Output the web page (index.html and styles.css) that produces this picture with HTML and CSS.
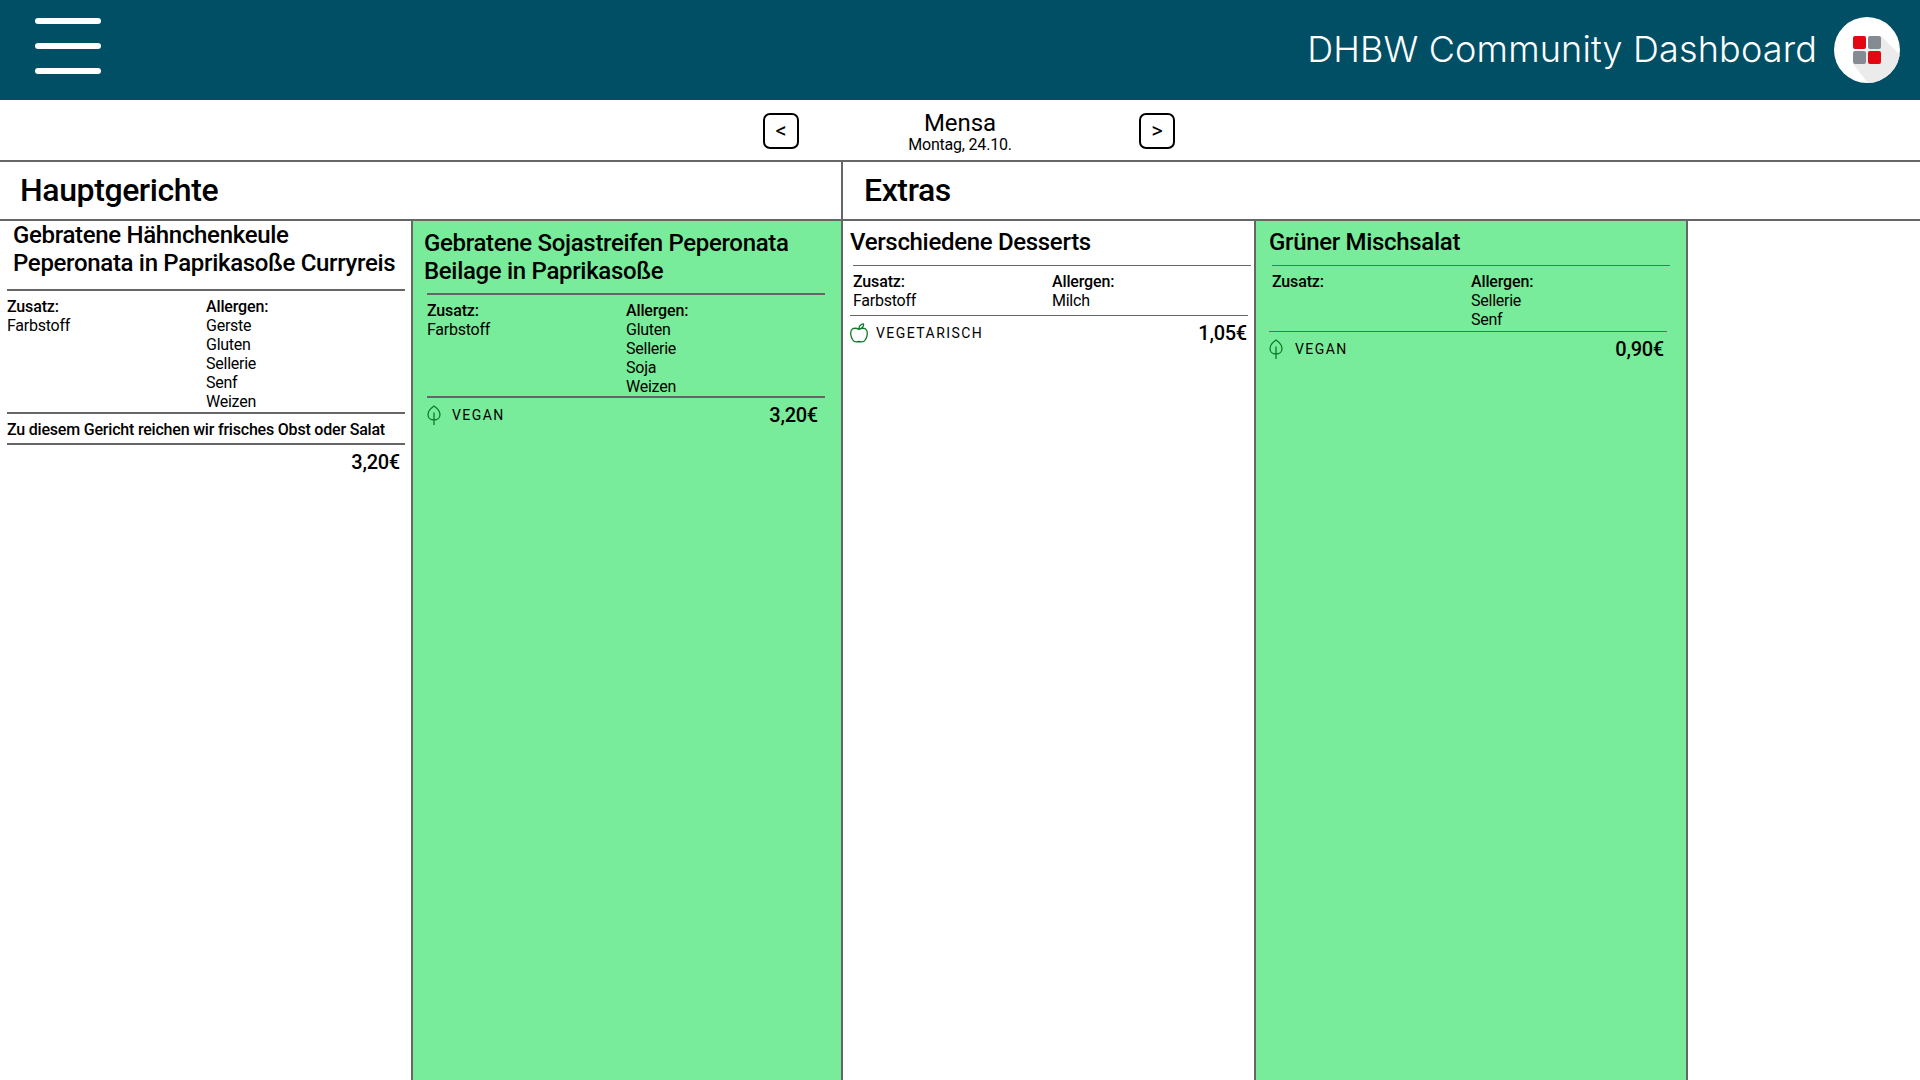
FILE: index.html
```html
<!DOCTYPE html>
<html lang="de">
<head>
<meta charset="utf-8">
<title>DHBW Community Dashboard</title>
<link rel="stylesheet" href="styles.css">
</head>
<body>
<header class="topbar">
  <button class="burger" aria-label="Menü"><span></span><span></span><span></span></button>
  <div class="brand">
    <h1 class="brand-title">DHBW Community Dashboard</h1>
    <svg class="logo" viewBox="0 0 66 66" width="66" height="66" aria-hidden="true">
      <defs><clipPath id="logo-clip"><circle cx="33" cy="33" r="33"/></clipPath></defs>
      <circle cx="33" cy="33" r="33" fill="#fff"/>
      <polygon clip-path="url(#logo-clip)" points="47,19 80,52 80,80 45,80 19,47" fill="#ebebeb"/>
      <rect x="19" y="19" width="13" height="13" rx="2" fill="#e30613"/>
      <rect x="34" y="19" width="13" height="13" rx="2" fill="#868b93"/>
      <rect x="19" y="34" width="13" height="13" rx="2" fill="#868b93"/>
      <rect x="34" y="34" width="13" height="13" rx="2" fill="#e30613"/>
    </svg>
  </div>
</header>

<nav class="daynav">
  <button class="navbtn">&lt;</button>
  <div class="daylabel">
    <div class="dayplace">Mensa</div>
    <div class="daydate">Montag, 24.10.</div>
  </div>
  <button class="navbtn">&gt;</button>
</nav>

<div class="sections">
  <h2 class="section section-main">Hauptgerichte</h2>
  <h2 class="section section-extra">Extras</h2>
</div>

<main class="cards">
  <article class="card card-a">
    <h3 class="dish-title">Gebratene Hähnchenkeule<br>Peperonata in Paprikasoße Curryreis</h3>
    <div class="meta">
      <div class="meta-col"><strong>Zusatz:</strong><span>Farbstoff</span></div>
      <div class="meta-col"><strong>Allergen:</strong><span>Gerste</span><span>Gluten</span><span>Sellerie</span><span>Senf</span><span>Weizen</span></div>
    </div>
    <p class="note">Zu diesem Gericht reichen wir frisches Obst oder Salat</p>
    <div class="foot">
      <span class="price">3,20€</span>
    </div>
  </article>

  <article class="card card-b green">
    <h3 class="dish-title">Gebratene Sojastreifen Peperonata<br>Beilage in Paprikasoße</h3>
    <div class="meta">
      <div class="meta-col"><strong>Zusatz:</strong><span>Farbstoff</span></div>
      <div class="meta-col"><strong>Allergen:</strong><span>Gluten</span><span>Sellerie</span><span>Soja</span><span>Weizen</span></div>
    </div>
    <div class="foot">
      <span class="tag">
        <svg class="icon-leaf" viewBox="0 0 14 20" width="14" height="20" aria-hidden="true"><path d="M7 1C3.500 3.500 1 6.500 1 9.500C1 12.800 3.500 15 7 15C10.500 15 13 12.800 13 9.500C13 6.500 10.500 3.500 7 1ZM7 8V20" fill="none" stroke="#0f7a28" stroke-width="1.300" stroke-linecap="round"/></svg>
        <span class="tag-text">VEGAN</span>
      </span>
      <span class="price">3,20€</span>
    </div>
  </article>

  <article class="card card-c thin">
    <h3 class="dish-title">Verschiedene Desserts</h3>
    <div class="meta">
      <div class="meta-col"><strong>Zusatz:</strong><span>Farbstoff</span></div>
      <div class="meta-col"><strong>Allergen:</strong><span>Milch</span></div>
    </div>
    <div class="foot">
      <span class="tag">
        <svg class="icon-apple" viewBox="0 0 18 20" width="18" height="20" aria-hidden="true"><path d="M9 6.500C7 5 3 4.500 1.500 7C0 9.500 0.800 14 2.800 17C4.300 19.500 6.500 19.200 9 18.500C11.500 19.200 13.700 19.500 15.200 17C17.200 14 18 9.500 16.500 7C15 4.500 11 5 9 6.500ZM9 6C8.800 3.500 10.500 1 13.500 0.800C14 3.500 12 5.600 9.500 5.800" fill="none" stroke="#0f7a28" stroke-width="1.300" stroke-linejoin="round"/></svg>
        <span class="tag-text">VEGETARISCH</span>
      </span>
      <span class="price">1,05€</span>
    </div>
  </article>

  <article class="card card-d green thin">
    <h3 class="dish-title">Grüner Mischsalat</h3>
    <div class="meta">
      <div class="meta-col"><strong>Zusatz:</strong></div>
      <div class="meta-col"><strong>Allergen:</strong><span>Sellerie</span><span>Senf</span></div>
    </div>
    <div class="foot">
      <span class="tag">
        <svg class="icon-leaf" viewBox="0 0 14 20" width="14" height="20" aria-hidden="true"><path d="M7 1C3.500 3.500 1 6.500 1 9.500C1 12.800 3.500 15 7 15C10.500 15 13 12.800 13 9.500C13 6.500 10.500 3.500 7 1ZM7 8V20" fill="none" stroke="#0f7a28" stroke-width="1.300" stroke-linecap="round"/></svg>
        <span class="tag-text">VEGAN</span>
      </span>
      <span class="price">0,90€</span>
    </div>
  </article>
</main>
</body>
</html>
```
FILE: styles.css
```css
* { box-sizing: border-box; }
html, body { margin: 0; height: 100%; }
body {
  display: flex;
  flex-direction: column;
  height: 1080px;
  overflow: hidden;
  background: #fff;
  color: #000;
  font-family: Roboto, "Liberation Sans", sans-serif;
}
h1, h2, h3, p { margin: 0; }

/* top bar */
.topbar {
  flex: 0 0 100px;
  display: flex;
  align-items: center;
  justify-content: space-between;
  padding: 0 20px 0 35px;
  background: #004f65;
}
.burger {
  display: flex;
  flex-direction: column;
  gap: 19px;
  width: 66px;
  padding: 0;
  margin-top: -8px;
  border: 0;
  background: none;
}
.burger span {
  display: block;
  height: 6px;
  border-radius: 3px;
  background: #fff;
}
.brand { display: flex; align-items: center; gap: 17px; }
.brand-title {
  margin-top: -2px;
  font-family: Inter, sans-serif;
  font-weight: 300;
  font-size: 36px;
  line-height: 44px;
  letter-spacing: 0.15px;
  color: #fff;
  white-space: nowrap;
}
.logo { display: block; }

/* day navigation */
.daynav {
  flex: 0 0 62px;
  display: flex;
  justify-content: center;
  align-items: flex-start;
  border-bottom: 2px solid #666;
  padding: 13px 0 0 18px;
}
.navbtn {
  width: 36px;
  height: 36px;
  padding: 0;
  border: 2px solid #000;
  border-radius: 7px;
  background: #fff;
  color: #000;
  font-family: Roboto, sans-serif;
  font-size: 22px;
  line-height: 30px;
}
.daylabel { width: 340px; margin-top: -4px; padding-right: 18px; text-align: center; }
.dayplace { font-size: 24px; line-height: 28px; letter-spacing: -0.05px; }
.daydate { font-size: 16px; line-height: 16px; letter-spacing: -0.2px; }

/* section heads */
.sections {
  flex: 0 0 59px;
  display: flex;
  border-bottom: 2px solid #666;
}
.section {
  font-weight: 550;
  font-size: 32px;
  line-height: 57px;
  letter-spacing: -0.4px;
}
.section-main { width: 843px; padding-left: 20px; border-right: 2px solid #666; }
.section-extra { padding-left: 21px; }

/* cards */
.cards { flex: 1; display: flex; min-height: 0; }
.card {
  display: flex;
  flex-direction: column;
  border-right: 2px solid #666;
}
.green { background: #78ec9a; }
.card-a { width: 413px; }
.card-b { width: 430px; padding-top: 8px; }
.card-c { width: 413px; padding-top: 7px; }
.card-d { width: 432px; padding-top: 7px; }

.dish-title {
  font-weight: 550;
  font-size: 24px;
  line-height: 28px;
  letter-spacing: -0.32px;
}
.card-a .dish-title { margin-left: 13px; }
.card-b .dish-title { margin-left: 11px; }
.card-c .dish-title { margin-left: 7px; }
.card-d .dish-title { margin-left: 13px; }

.meta {
  display: grid;
  grid-template-columns: 199px 1fr;
  width: 398px;
  margin-top: 12px;
  padding: 6px 0 0;
  border-top: 2px solid #666;
  font-size: 16px;
  line-height: 19px;
  letter-spacing: -0.25px;
}
.thin .meta { margin-top: 9px; border-top-width: 1px; }
.card-a .meta { margin-left: 7px; padding-bottom: 1px; }
.card-b .meta { margin-top: 8px; margin-left: 14px; }
.card-c .meta { margin-left: 10px; padding-bottom: 5px; }
.card-d .meta { margin-left: 16px; padding-bottom: 2px; }
.meta-col { display: flex; flex-direction: column; }
.meta-col strong { font-weight: 500; letter-spacing: -0.15px; }

.note {
  width: 398px;
  margin-left: 7px;
  padding-top: 2px;
  border-top: 2px solid #666;
  font-weight: 500;
  font-size: 16px;
  line-height: 27px;
  letter-spacing: -0.2px;
}

.foot {
  display: flex;
  justify-content: space-between;
  align-items: center;
  width: 398px;
  height: 34px;
  padding: 1px 7px 0 0;
  border-top: 2px solid #666;
}
.thin .foot { border-top-width: 1px; }
.card-a .foot { margin-left: 7px; justify-content: flex-end; padding-right: 5px; }
.card-b .foot { margin-left: 14px; }
.card-c .foot { margin-left: 7px; padding-right: 1px; }
.card-d .foot { margin-left: 13px; padding-right: 3px; }

.tag { display: flex; align-items: center; }
.icon-leaf { display: block; margin-right: 12px; }
.card-b .icon-leaf { margin-right: 11px; }
.icon-apple { display: block; margin-right: 8px; }
.tag-text {
  font-size: 14px;
  letter-spacing: 1.45px;
  line-height: 20px;
}
.price { font-weight: 550; font-size: 20px; line-height: 24px; letter-spacing: -0.25px; }
```
